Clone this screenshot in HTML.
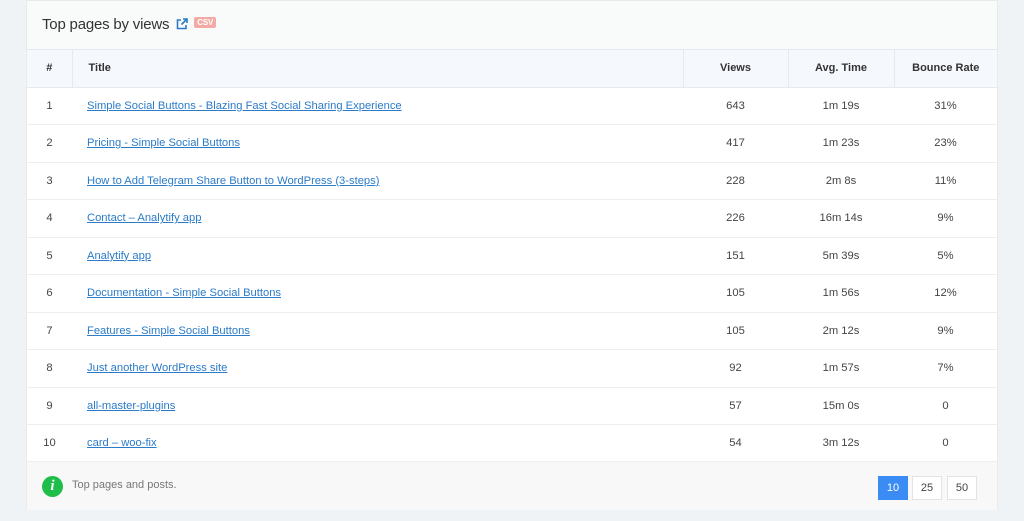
<!DOCTYPE html>
<html><head><style>
*{margin:0;padding:0;box-sizing:border-box}
body{width:1024px;height:521px;background:#f0f3f6;font-family:"Liberation Sans",sans-serif;position:relative;overflow:hidden}
.card{position:absolute;left:26px;top:0;width:972px;height:510px;background:#fff;border:1px solid #e8ebee}
.hd{height:49px;background:#f9fafa;border-bottom:1px solid #e6eaee;padding:15px 0 0 15px;font-size:15px;color:#333;letter-spacing:-0.2px}
.csv{display:inline-block;background:#f4aaa4;color:#fff;font-size:8px;font-weight:bold;padding:1px 3px;border-radius:2px;vertical-align:4px;margin-left:6px}
table{border-collapse:collapse;width:970px;font-size:11.2px;color:#444}
th{height:37px;background:#f5f8fc;font-weight:bold;color:#333;border-right:1px solid #e6eaee;border-bottom:1px solid #e6eaee;font-size:11px}
th:last-child{border-right:none}
td{height:37.5px;border-bottom:1px solid #eceff2}
td a{color:#2b7bc7;text-decoration:underline}
.c{text-align:center}
.ft{position:absolute;left:0;top:460px;width:970px;height:49px;background:#f8f8f8;font-size:11px;color:#777;border-top:1px solid #eceff2}
.pg{position:absolute;top:14px;width:30px;height:24px;border:1px solid #e3e3e3;background:#fff;text-align:center;line-height:22px;font-size:11px;color:#444}
</style></head><body>
<div class="card">
<div class="hd">Top pages by views <svg width="12" height="12" viewBox="0 0 12 12" style="vertical-align:-1px;margin-left:3px"><path d="M5 2H1.5v8.5H10V7" fill="none" stroke="#2b7bc7" stroke-width="1.6"/><path d="M7 1h4v4M11 1 5.5 6.5" fill="none" stroke="#2b7bc7" stroke-width="1.6"/></svg><span class="csv">CSV</span></div>
<table>
<tr><th style="width:45px">#</th><th style="width:611px;text-align:left;padding-left:16px">Title</th><th style="width:105px">Views</th><th style="width:106px">Avg. Time</th><th>Bounce Rate</th></tr>
<tr><td class="c">1</td><td style="padding-left:15px"><a>Simple Social Buttons - Blazing Fast Social Sharing Experience</a></td><td class="c">643</td><td class="c">1m 19s</td><td class="c">31%</td></tr>
<tr><td class="c">2</td><td style="padding-left:15px"><a>Pricing - Simple Social Buttons</a></td><td class="c">417</td><td class="c">1m 23s</td><td class="c">23%</td></tr>
<tr><td class="c">3</td><td style="padding-left:15px"><a>How to Add Telegram Share Button to WordPress (3-steps)</a></td><td class="c">228</td><td class="c">2m 8s</td><td class="c">11%</td></tr>
<tr><td class="c">4</td><td style="padding-left:15px"><a>Contact – Analytify app</a></td><td class="c">226</td><td class="c">16m 14s</td><td class="c">9%</td></tr>
<tr><td class="c">5</td><td style="padding-left:15px"><a>Analytify app</a></td><td class="c">151</td><td class="c">5m 39s</td><td class="c">5%</td></tr>
<tr><td class="c">6</td><td style="padding-left:15px"><a>Documentation - Simple Social Buttons</a></td><td class="c">105</td><td class="c">1m 56s</td><td class="c">12%</td></tr>
<tr><td class="c">7</td><td style="padding-left:15px"><a>Features - Simple Social Buttons</a></td><td class="c">105</td><td class="c">2m 12s</td><td class="c">9%</td></tr>
<tr><td class="c">8</td><td style="padding-left:15px"><a>Just another WordPress site</a></td><td class="c">92</td><td class="c">1m 57s</td><td class="c">7%</td></tr>
<tr><td class="c">9</td><td style="padding-left:15px"><a>all-master-plugins</a></td><td class="c">57</td><td class="c">15m 0s</td><td class="c">0</td></tr>
<tr><td class="c">10</td><td style="padding-left:15px"><a>card – woo-fix</a></td><td class="c">54</td><td class="c">3m 12s</td><td class="c">0</td></tr>
</table>
<div class="ft">
<div style="position:absolute;left:15px;top:14px;width:21px;height:21px;border-radius:50%;background:#1fbe4b;color:#fff;font-weight:bold;font-style:italic;font-family:'Liberation Serif',serif;font-size:15px;text-align:center;line-height:21px">i</div>
<div style="position:absolute;left:45px;top:17px">Top pages and posts.</div>
<div class="pg" style="left:851px;background:#3a8cf4;border-color:#3a8cf4;color:#fff">10</div>
<div class="pg" style="left:885px">25</div>
<div class="pg" style="left:920px">50</div>
</div>
</div>
</body></html>
